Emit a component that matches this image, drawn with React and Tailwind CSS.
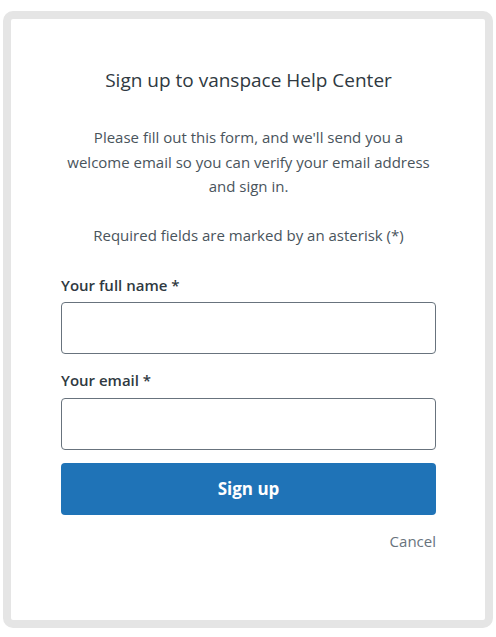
export default function App() {
  return (
    <div className="w-[496px] h-[637px] bg-white pt-[11px] px-[3px]" style={{ fontFamily: '"Open Sans", "Noto Sans", sans-serif' }}>
      <div className="h-[617px] rounded-[10px] border-[8px] border-[#e5e5e5] bg-white pl-[50px] pr-[49px]">
        <h1 className="mt-[49px] text-center text-[19px] leading-[24px] text-[#2f3941] whitespace-nowrap">Sign up to vanspace Help Center</h1>
        <p className="mt-[33px] text-center text-[15px] leading-[24.5px] text-[#49545c] whitespace-nowrap -mx-[10px]">
          Please fill out this form, and we'll send you a<br />welcome email so you can verify your email address<br />and sign in.
        </p>
        <p className="mt-[24px] text-center text-[15px] leading-[24px] text-[#49545c]">
          Required fields are marked by an asterisk (*)
        </p>
        <label className="mt-[28px] block text-[15px] font-semibold leading-[20px] text-[#2f3941]">Your full name *</label>
        <input className="mt-[7px] block h-[52px] w-full rounded-[4px] border border-[#68737d] bg-white" />
        <label className="mt-[16px] block text-[15px] font-semibold leading-[20px] text-[#2f3941]">Your email *</label>
        <input className="mt-[8px] block h-[52px] w-full rounded-[4px] border border-[#68737d] bg-white" />
        <button className="mt-[13px] block h-[52px] w-full rounded-[4px] bg-[#1f73b7] text-[17px] font-bold text-white">Sign up</button>
        <div className="mt-[16px] text-right text-[15px] leading-[20px] text-[#68737d]">Cancel</div>
      </div>
    </div>
  );
}
